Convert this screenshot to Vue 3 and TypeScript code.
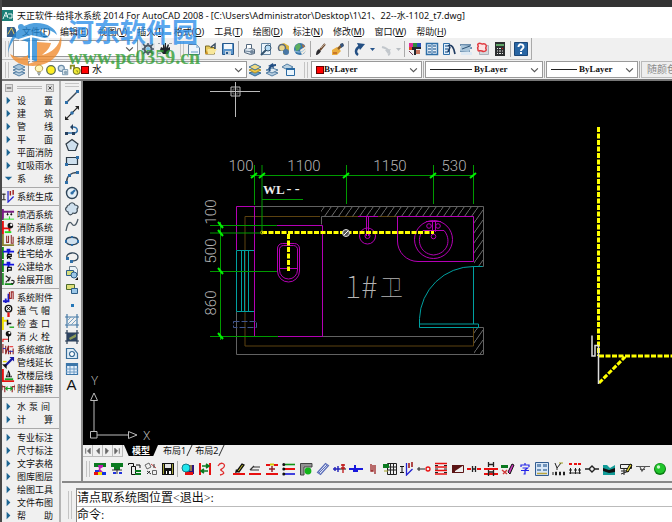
<script setup lang="ts">
import { h, ref } from 'vue'

type Shape = { d: string; fill: string; stroke: string; w: number }
const f = (fill: string, d: string): Shape => ({ d, fill, stroke: 'none', w: 0 })
const s = (stroke: string, d: string, w = 1, fill = 'none'): Shape => ({ d, fill, stroke, w })
const ring = (x: number, y: number, r: number) => `M${x - r} ${y}a${r} ${r} 0 1 0 ${2 * r} 0a${r} ${r} 0 1 0 ${-2 * r} 0z`

const navy = '#25405f'
const blue = '#2f6fa8'
const pale = '#cfe0ee'
const red = '#e81010'
const green = '#0a7a20'

const icons: Record<string, Shape[]> = {
  gear: [f('#dfe3e8', 'M0 1h14v12H0z'), s('#4a5866', ring(7, 7, 3.5), 2), s('#4a5866', 'M7 1v2M7 11v2M1 7h2M11 7h2M2 2l3 3M12 2L9 5M2 12l3-3M12 12L9 9', 1.5), f('#7dc1e8', ring(7, 7, 2))],
  hand: [f('#20242a', 'M3 5l2 1V2h1v4l1-5h1v5l2-4 1 1-1 3 2-1v3l-2 4H5L2 8z'), f('#9aa2aa', 'M0 1h2v1H0zM11 1h3v1h-3zM0 11h3v1H0z')],
  fresh: [s('#5d7e9e', 'M1.5 2.5h8l3 3v7h-11z', 1, '#eef5fb'), f('#a9c8e2', 'M9 2v4h4zM4 9h7v2H4z')],
  open: [s('#7a6a28', 'M1.5 12V4h4l1 1.5h4V12z', 1, '#e7c95c'), f('#f8e79a', 'M4 7h9l-3 5H1z'), s('#3a4d60', 'M7 5l4-3v5', 1.5), f('#d09422', 'M1 12l2-4 1 4z')],
  save: [s('#27598c', 'M1.5 1.5h11v11h-11z', 1, '#5c96cc'), f('#f2f7fb', 'M3 2h8v5H3z'), f('#c4d2de', 'M4 9h6v4H4z'), f('#27598c', 'M5 10h2v2H5z')],
  plot: [s('#53677c', 'M2.5 7.5l3-2 7 2v4l-4 1-6-2z', 1, '#dbe5ee'), s('#53677c', 'M4.5 6V2.5h5V6', 1, '#fff'), s('#71869b', 'M3 9l8 1', 1), f('#71869b', ring(10, 10, 2))],
  preview: [s('#6686a2', 'M2.5 1.5h9v11h-9z', 1, '#eaf4fc'), s('#34536e', ring(9, 6, 3), 1, '#b4daf4'), s('#34536e', 'M7 8l-5 5', 2)],
  publish: [f('#d9b33c', 'M3 3l5-2 5 3v5l-4 4-6-3z'), s('#58677c', ring(6, 6, 3.5), 1.5, '#e9d58c'), f('#4977a5', ring(10, 10, 3)), f('#e9f0f5', 'M3 9h4v3H3z')],
  globe: [f('#3976aa', ring(7, 7, 6)), f('#5dad5e', 'M2 4l4-3 2 3-2 4-3 1z'), f('#f1ece1', 'M7 8l6-4v5l-4 4z'), f('#b86f3a', 'M9 2l3 2-2 2z'), s('#a9cde5', 'M2 9c4 2 8 1 10-2')],
  brush: [f('#2b2b30', 'M2 13c0-3 1-5 3-6l2 2c-1 2-3 4-5 4z'), s('#6d4b30', 'M6 8l5-6', 2), s('#b7a08b', 'M7 6l4-4')],
  match: [f('#e9ad3f', 'M1 8l5-3 4 4-4 4H1z'), s('#8b5c24', 'M7 7l5-5', 2.5), f('#34547e', 'M9 2l3-1 1 3-3 2z'), f('#c97628', 'M2 10h4v2H2z')],
  undo: [s('#234f83', 'M6 13C3 11 3 6 9 4', 2.5), f('#234f83', 'M5 1l8 1-5 6z')],
  redo: [s('#c2c7cc', 'M10 13c3-1 2-6-6-8', 2), f('#c2c7cc', 'M13 7l-3 5-3-4z')],
  more: [f('#27558b', 'M5 6h5L7.5 9z')],
  moreOff: [f('#b8bdc2', 'M5 6h5L7.5 9z')],
  props: [f('#e02c9c', 'M1 1h4v4H1z'), f('#2c8e3c', 'M5 1h4v4H5z'), f('#2951b8', 'M9 1h4v4H9z'), f('#e14d24', 'M1 5h4v3H1z'), f('#23272d', 'M4 5h9v2H8v6H6V8H4z'), f('#c5735d', 'M8 8h4v4H8z'), s('#733c58', 'M1 9l4 4')],
  center: [s(blue, 'M1.5 1.5h11v11h-11z', 1.5, '#e9f1f8'), s('#4d7ba7', 'M3 4h3M3 7h3M3 10h3M8 4h3M8 7h3M8 10h3', 1.5), s(blue, 'M7 2v10')],
  palette: [s(blue, 'M1.5 1.5h11v11h-11z', 1, '#dfeefb'), f('#5486b2', 'M3 3h3v3H3zM7 3h4v1H7zM3 8h3v3H3zM7 8h4v1H7z')],
  tools: [s(blue, 'M1.5 1.5h6v11h-6z', 1, '#dfeefb'), s('#4d7ba7', 'M3 4h3M3 7h3M3 10h3', 1.5), s('#203c62', 'M6 4c4-2 6 2 7 8M8 5l-2 5', 1.7)],
  sheet: [f('#6d8fae', 'M1 2h11v2H1zM3 5h10v2H3zM1 8h10v2H1z'), f('#a9c5da', 'M2 3l10 1-2 6-9-1z'), f('#dde9f3', 'M2 10h11v3H2z'), s('#2c5275', 'M3 7l8-3')],
  markup: [s('#aab1ba', 'M3.5 3.5h9v9h-9z', 1, '#d5d9dd'), s('#e1393f', 'M2 2c2-2 3 0 4 0s3-1 4 1-1 2 0 4-2 3-4 2-4 1-4-1-1-2 0-3-1-2 0-3z', 1.5, '#fbe4e4')],
  calc: [f('#2c2e30', 'M2 0h10v14H2z'), f('#5ea366', 'M3 2h8v2H3z'), s('#e5e5e5', 'M4 6.5h6M4 9h6M4 11.5h6', 1), s('#2c2e30', 'M5.5 5v8M8.5 5v8'), f(red, 'M9 6h1v1H9z')],
  help: [s('#1b4677', 'M.5.5h13v13H.5z', 1, '#2865a3'), s('#fff', 'M4.5 5c0-4 5-3 5 0 0 2-2.5 1.5-2.5 4', 2), f('#fff', 'M6 10h2v2H6z')],
  layers: [s('#547fa4', 'M1 10l6-2 6 2-6 3z', 1, '#b5cde0'), s('#547fa4', 'M1 7l6-2 6 2-6 3z', 1, '#d0dfe9'), s('#547fa4', 'M1 4l6-3 6 3-6 3z', 1, '#a5c3da')],
  layerCur: [s('#376b98', 'M1 10l6-2 6 2-6 3z', 1, '#69a0c5'), s('#b08f29', 'M1 7l6-2 6 2-6 3z', 1, '#f0c946'), s('#376b98', 'M1 4l6-3 6 3-6 3z', 1, '#edda83')],
  layerPrev: [s('#547fa4', 'M1 10l6-2 6 2-6 3z', 1, '#b5cde0'), s('#547fa4', 'M1 7l6-2 6 2-6 3z', 1, '#dce7ef'), s('#234f83', 'M5 8c-2-3 1-6 6-6', 2), f('#234f83', 'M3 3l5-3 1 5z')],
  layerState: [s('#547fa4', 'M0 4l5-3 6 3-5 3z', 1, '#bad1e1'), s('#2a6aa3', 'M4.5 5.5h8v7h-8z', 1, '#e9f4fc'), f('#2a6aa3', 'M4 5h9v2H4z')],
  bulb: [s('#a68e3a', 'M5 9C0 5 4 1 7 1s7 4 2 8z', 1, '#fff6b8'), f('#566', 'M5 10h4v1H5zM6 12h2v1H6z')],
  sun: [s('#5c6f51', ring(7, 7, 5), 1.5, '#ffee22')],
  freeze: [s('#6c8da8', ring(5, 5, 3.5), 1.5, '#d3e1ea'), s('#6c8da8', 'M6.5 6.5h6v6h-6z', 1, '#e4edf3'), f('#8da7b8', ring(10, 10, 2))],
  lock: [s('#8a8c22', 'M2 6V2h4v4', 2), s('#6f7426', ring(9, 8, 4), 1.2, '#f2ec35'), s('#8a8c22', 'M8 8h2v2')],
  line: [s('#3e4955', 'M2 12L12 2', 1.5), f(blue, 'M0 11h3v3H0zM11 0h3v3h-3z')],
  xline: [s('#222', 'M0 14L14 0', 1.2), f('#222', 'M0 10l4 4H0zM10 0h4v4z'), f(blue, ring(7, 7, 1.8))],
  pline: [s(blue, 'M1 11h8c5 0 4-6-1-6', 1.5), f(navy, 'M0 10h3v3H0zM7 10h3v3H7zM8 2v6L5 5z')],
  polygon: [s('#2f3b46', 'M7 1.5l6 4.5-2.5 6.5h-7L1 6z', 1.2, pale)],
  rect: [s('#2f3b46', 'M1.5 3.5h11v7h-11z', 1.2, pale), f(blue, 'M0 9h3v3H0zM11 2h3v3h-3z')],
  arc: [s('#3e4955', 'M1.5 12.5c0-6 4-10 11-10', 1.5), f(blue, 'M0 11h3v3H0zM11 1h3v3h-3zM3 4h3v3H3z')],
  circle: [s('#2f4559', ring(7, 7, 5.5), 1.4, '#e4eff7'), s(blue, 'M7 7l3-3', 2), f(blue, ring(7, 7, 1.6))],
  cloud: [s('#3a4752', 'M4 3c1-3 5-3 6 0 3 0 4 2 2 4 1 3-1 5-4 4-2 3-5 2-5-1-3-1-3-4-1-5 0-1 1-2 2-2z', 1.2, pale)],
  spline: [s('#4c5a66', 'M1 13C3 2 6 4 7 6s4 3 6-5', 1.3)],
  ellipse: [s('#2f4559', 'M1 7c0-5 12-5 12 0s-12 5-12 0z', 1.3, pale), f(blue, 'M0 6h2v3H0zM12 6h2v3h-2zM6 2h2v2H6zM6 10h2v2H6z')],
  earc: [s('#2f4559', 'M2 8c-2-6 11-7 11-1 0 3-3 4-6 4', 1.3), f(blue, 'M1 7h3v3H1zM5 10h3v3H5z')],
  insert: [s('#6a7d8d', 'M4.5.5h6l2 3v6h-8z', 1, '#eaf2f8'), s('#2c5d87', 'M1.5 4.5h7v5h-7z', 1, '#d6dd7c'), s('#2c5d87', ring(9, 9, 3), 1, '#9cc7e7'), f('#111', 'M13 11v3h-3z')],
  block: [s('#4d6b2d', 'M1.5 2.5h8v5h-8z', 1, '#dedf79'), s('#2c5d87', 'M6.5 6.5h6v5h-6z', 1, '#9cc7e7')],
  point: [f('#2577b8', 'M6 6h3v3H6z')],
  hatch: [s('#4478a5', 'M2 0v14M12 0v14M0 3h14M0 11h14', 1.2), s('#79a1c1', 'M2 7l4-4M2 11l8-8M6 11l6-6M10 11l2-2')],
  gradient: [s('#253951', 'M2 0v14M12 0v14M0 3h14M0 11h14', 1.2), f('#2c4260', 'M2 3h10v8H2z'), f('#8b9a58', 'M4 8l7-4v3l-6 3z')],
  region: [s('#396d98', 'M1.5 12.5V2.5h7l4 5v5z', 1.2, '#deebf5'), s('#396d98', ring(7, 8, 2.5), 1.2, '#fff')],
  table: [s('#3c76a9', 'M1.5 1.5h11v11h-11z', 1.2, '#e4effa'), f('#3c76a9', 'M1 1h12v3H1z'), s('#6e9cc5', 'M1 7h12M1 10h12M5 4v8M9 4v8')],
  // sidebar
  sysgen: [s('#111', 'M0 4.5h4M0 10.5h4M2 4v6'), s('#2222d0', 'M6.5 1v12l6-6', 1.3), s('#a02020', 'M9 6V1M12 5V0', 1.6)],
  spray: [s('#7b1c86', 'M1 1v12M1 4h12', 2), s('#111', 'M6 5v3M10 5v3M5 7h2M9 7h2'), s('#24e024', 'M1 12h12M8 9v3')],
  fire: [s(red, 'M1 0v14M1 8h7v4', 2), s('#24e024', 'M3 12h7', 2), f('#111', ring(9, 5, 3)), f('#fff', ring(10, 4, 1.3))],
  drain: [s('#8b8232', 'M1 0v12h12', 2), s('#8f3030', 'M5 2v7h2V2M10 1v9h2V3', 1.2)],
  house: [s('#118c18', 'M1 0v13', 2), s('#1414e0', 'M1 5h12M7 2v6M5 3h4', 2), s('#111', 'M6 13V8h4v2H6l4 3', 1.3)],
  publicw: [s('#118c18', 'M1 0v13', 2), s('#1414e0', 'M1 5h12M7 2v6M5 3h4', 2), s('#111', 'M6 13V8h4v3H6', 1.3)],
  unfold: [s('#118c18', 'M1 0v13M3 12h9', 1.7), s('#222', 'M4 3l4 3-4 4M9 4l-2 5M10 8c5-1 3 5 0 3', 1.2)],
  sysatt: [s('#1818cc', 'M1 11h7M4 8v5M7 11V3', 2), s('#9c2424', 'M8 1v7h2V1h2v8', 1.2)],
  vent: [s('#111', ring(7, 5, 3.5), 1.5, '#eee'), s('#111', 'M5 3l4 4M9 3L5 7'), s(red, 'M7 9v5', 2.5)],
  check: [s('#f0e000', 'M1 0v14M1 4h5', 2), s('#111', 'M6 3v6M6 7h4', 1.6), s('#1fa71f', 'M8 11h5', 1.5)],
  hydrant: [s(red, 'M1 13v-3h6', 1.2), s('#111', 'M7 13V6'), f('#111', ring(7, 4, 3)), f('#fff', ring(8, 3, 1.2))],
  scale: [s('#8f2020', 'M1 1v10M4 3v9l3-9v9M9 8v4M12 6v6', 1.2), s('#2424b8', 'M1 6h3M7 9h5'), s(red, 'M8 4h4')],
  extend: [s('#1a1aa5', 'M3 11l8-8', 2.5), f('#1a1aa5', 'M8 1h5v5z'), f('#111', 'M0 9h5v5z'), s('#ddd400', 'M1 6h4', 1.5)],
  floor: [s(red, 'M1 0v13h12', 2), f('#111', 'M7 1l4 8H4z'), f('#fff', 'M6 4h1v4H6zM9 4h1v4H9z'), s('#19a522', 'M3 11h9', 2)],
  flip: [s('#9a3030', 'M0 5h3v6M0 3v6M14 5h-3v6M14 3v6', 1.3), s('#18a026', 'M4 7h6M6 5L4 7l2 2M9 5l2 2-2 2', 1.3)],
  // bottom bar
  rainbow: [f(green, 'M1 1h12v4H1z'), f('#c01bb4', 'M5 3h5v2L7 7l3 3H4l2-3z'), f('#2233dd', 'M2 8h4v2H2z'), f(red, 'M1 10h4v3H1z'), f('#f1de00', 'M5 10h4v3H5z'), f('#1330e0', 'M9 10h4v3H9z')],
  tree: [f(green, 'M1 1h12v4H1zM4 5h6v3H4z'), s('#333', 'M2 8h10M7 7v5'), f('#2233dd', 'M3 10h3v2H3zM9 10h3v2H9z')],
  copyprop: [s('#111', 'M1.5 3V1.5h5V5M4.5 4.5h4v8h-4z', 1, '#eee'), s('#111', 'M9 3h4v3'), f(green, 'M8 8h6v2H8zM8 11h6v2H8z')],
  swap: [s('#666', 'M1 3l4-2 2 4-4 2zM8.5 8.5h4v4h-4z'), s('#c44', 'M7 2l5 4', 1), s('#333', 'M3 9l4 3M3 12l3-3M10 2v4')],
  disk: [f('#111', 'M1 1h12v12H1z'), f('#a1a13a', 'M2 2h1v10H2zM11 2h1v10h-1z'), f('#e4e4e4', 'M4 2h6v4H4z'), f('#fff', 'M5 9h5v3H5z'), f('#111', 'M6 9h2v3H6z')],
  lens: [f('#2c157d', 'M5 3h8v9H5z'), f(red, 'M4 10h8v3H4z'), s('#157d8c', ring(5, 6, 4), 1, '#20e6ed'), s('#f3da24', 'M10 3v6')],
  trim: [s(red, 'M2 1v12M12 1v12', 2), s(green, 'M4 4h6M8 2l3 2-3 2M10 9H4M6 7L3 9l3 2', 1.6)],
  curve: [s('#e02e2e', 'M3 4c3-5 8-2 6 1S4 7 7 9s2 3-2 4', 1.3)],
  pencil: [s(red, 'M1 12h12', 2), s('#111', 'M5 9l5-7 2 1-5 7z', 1.3, '#d4d02b'), f('#111', 'M3 11l1-4 3 3z')],
  under: [s(red, 'M1 12h12', 2), s('#333', 'M5 5h7M2 8h9M6 4l-4 4', 1.2)],
  join: [s(red, 'M1 3h4M9 3h4M1 12h12', 2), s('#d5c900', 'M5 2.5h4', 2), s('#8d1b22', 'M7 4v6M4 7h6', 1.4)],
  list: [s(red, 'M3 7h10', 2), s('#129417', 'M3 2.5h10', 1.6), s('#1616da', 'M3 12h10', 1.6), f('#111', ring(1.8, 2.5, 1.5)), f('#111', ring(1.8, 7, 1.5)), f('#111', ring(1.8, 12, 1.5))],
  corner: [s('#444', 'M1.5 13V1.5H13V5H5v8z', 1, '#939393'), f('#12b51a', ring(9, 9, 3.4))],
  pipe: [s('#5a6cb8', 'M1.5 10.5l8-9 3 2-8 9z', 1.2, '#e5eaf7'), s('#5a6cb8', 'M3 11l8-8')],
  valve: [s('#2222b8', 'M0 7h7M2 5v4M5 4v6', 1.4), s('#111', 'M7 7h6'), s('#be1414', 'M10 2v9M8 3h4M8 6h4', 1.3)],
  tap: [s('#1818dc', 'M0 7h14M6 3v6M4 9h5', 2)],
  riser: [s('#922', 'M5 2v7h2V3M9 3v9', 1.3)],
  grid: [s('#222', 'M4.5 1.5h9v11h-9zM4 5h9M4 8h9M7.5 2v11M10.5 2v11'), f(green, 'M0 2h6v4H0z'), s('#a3a323', 'M1 9h4')],
  link: [s('#222', 'M0 7h8M2 5v4'), s(red, ring(11, 7, 2), 1.3)],
  bars: [s(red, 'M1 1.5h12M1 5h12M1 8.5h12M1 12h12', 1.5), s('#222', 'M1 3.500h3M10 3.500h3M1 7h3M10 7h3M1 10.500h3M10 10.500h3', 1)],
  wedge: [s('#5b1515', 'M1.5 3.5h11v7h-11z', 1, '#eee'), f('#5b1515', 'M1 3h12L4 9v2H1z')],
  hdash: [s(red, 'M0 7h4M10 7h4', 1.8), s('#222', 'M5.5 4v6M8.5 4v6M5 7h4', 1.3)],
  stack: [s(red, 'M0 7h14M0 12h14', 2), s('#222', 'M4.5 0v5M9.5 0v5M4 2.5h5M4.5 8v6M9.5 8v6M4 10h6', 1.3)],
  erase: [f(green, 'M0 3h7v3H0z'), s('#111', 'M7 10l4-8 2 1-4 9z', 1, '#cd36bb'), s('#d03838', 'M1 8l5 4M2 12l4-4', 1.4)],
  zi: [s('#2424e8', 'M7 1v2M3 5V3h8v2M4.500 6h5L7 8v4H5.500M3 8.500h8', 1.2)],
  window: [s('#335d91', 'M.5.5h13v13H.5z', 1, '#d7e6f7'), f('#6f93bb', 'M2 2h4v3H2zM8 2h4v3H8zM2 7h4v2H2zM8 7h4v2H8z'), s('#bba63d', 'M2 11.5h10', 1.5)],
  level: [s('#222', 'M3 1l2 5 4-5M5 6v2M1 10v3M4.5 10v3h-1v-3zM8.5 10v3h-1v-3zM12.5 10v3h-1v-3z'), s('#a3a323', 'M7 1h4')],
  sprink: [s('#222', 'M1 11h12M2.5 6v6M7.5 6v6M11.5 6v6M1 8h3M6 8h3M10 8h3'), f(red, 'M1 1h3v2H1zM6 1h3v2H6zM10 1h3v2h-3z')],
  node: [s('#222', 'M0 7h4M10 7h4M7 4l3 3-3 3-3-3z', 1.4)],
  terrain: [f('#129c98', 'M1 3h4l3 3 5-3v10H1z'), f('#111', 'M1 6l6 2 6-2v4l-6 1-6-2z')],
  edit: [s('#222', 'M1.5 2.5h11v4h-11zM2 9h8M5 6v7M2 12l8-3'), s('#111', 'M7 9l4-7 2 1-4 7z', 1, '#ded52f')],
  flag: [s('#555', 'M0 4.5h14M4 7.5h5M4 5l2 4 3-4', 1.2)],
  ball: [f('#0a7c12', ring(7, 7, 6)), f('#20c52b', ring(7, 6.5, 5)), f('#c9f6c9', ring(5.5, 5, 1.7))]
}

const Icon = (props: { name: string }) =>
  h('svg', { class: 'ico', viewBox: '0 0 14 14', 'aria-hidden': 'true' },
    (icons[props.name] ?? []).map(p => h('path', { d: p.d, fill: p.fill, stroke: p.stroke, 'stroke-width': p.w })))
Icon.props = ['name']

const menus = [['文件', 'F'], ['编辑', 'E'], ['视图', 'V'], ['插入', 'I'], ['格式', 'O'], ['工具', 'T'], ['绘图', 'D'], ['标注', 'N'], ['修改', 'M'], ['窗口', 'W'], ['帮助', 'H']]

const standard = [['fresh', 'open', 'save'], ['plot', 'preview', 'publish', 'globe'], ['brush', 'match'], ['undo', 'more', 'redo', 'moreOff'], ['props', 'center', 'tools', 'sheet', 'markup', 'calc'], ['help']]

const drawTools = ['line', 'xline', 'pline', 'polygon', 'rect', 'arc', 'circle', 'cloud', 'spline', 'ellipse', 'earc', 'insert', 'block', 'point', 'hatch', 'gradient', 'region', 'table']

type Row = { t: string; i?: string }
const palette: Row[][] = [
  [{ t: '设 置' }, { t: '建 筑' }, { t: '管 线' }, { t: '平 面' }, { t: '平面消防' }, { t: '虹吸雨水' }, { t: '系 统', i: 'open' }],
  [{ t: '系统生成', i: 'sysgen' }],
  [{ t: '喷洒系统', i: 'spray' }, { t: '消防系统', i: 'fire' }, { t: '排水原理', i: 'drain' }, { t: '住宅给水', i: 'house' }, { t: '公建给水', i: 'publicw' }, { t: '绘展开图', i: 'unfold' }],
  [{ t: '系统附件', i: 'sysatt' }, { t: '通 气 帽', i: 'vent' }, { t: '检 查 口', i: 'check' }, { t: '消 火 栓', i: 'hydrant' }, { t: '系统缩放', i: 'scale' }, { t: '管线延长', i: 'extend' }, { t: '改楼层线', i: 'floor' }, { t: '附件翻转', i: 'flip' }],
  [{ t: '水 泵 间' }, { t: '计 算' }],
  [{ t: '专业标注' }, { t: '尺寸标注' }, { t: '文字表格' }, { t: '图库图层' }, { t: '绘图工具' }, { t: '文件布图' }, { t: '帮 助' }]
]

const quickA = ['rainbow', 'tree', 'copyprop', 'swap', 'disk']
const quickB = ['lens', 'trim', 'curve', 'pencil', 'under', 'join', 'list', 'corner', 'pipe', 'valve', 'tap', 'riser', 'grid', 'sysgen', 'link', 'bars', 'wedge', 'hdash', 'stack', 'erase', 'zi', 'window', 'level', 'sprink', 'node', 'terrain', 'edit', 'flag', 'ball']

const xTicks = [254, 262, 346, 433, 473]
const yTicks = [225, 233, 271, 336]
const sheets = ['模型', '布局1', '布局2']
const sheet = ref('模型')
const command = ref('')
const navs = ['M3 2v6M8 2L5 5l3 3z', 'M7 2L4 5l3 3z', 'M3 2l3 3-3 3z', 'M7 2v6M2 2l3 3-3 3z']
</script>

<template>
  <div class="app">
    <div class="strip"></div>
    <header class="title">
      <svg class="logo" viewBox="0 0 11 11" aria-hidden="true"><path d="M0 0h11v11H0z" fill="#1b7f78" /><path d="M1 9l3-7 2 6M3 6h3M6 4h4v4H7" stroke="#e8f5f2" fill="none" /></svg>
      <h1>天正软件-给排水系统 2014 For AutoCAD 2008 - [C:\Users\Administrator\Desktop\1\21、22--水-1102_t7.dwg]</h1>
    </header>
    <nav class="menu">
      <svg class="doc" viewBox="0 0 12 12" aria-hidden="true"><path d="M1 1h8l2 3v8H1z" fill="#35618d" /><path d="M2 9l4-7 3 7" stroke="#f0d050" fill="none" /></svg>
      <button v-for="m in menus" :key="m[1]" type="button">{{ m[0] }}(<u>{{ m[1] }}</u>)</button>
    </nav>

    <div class="bar bar1">
      <i class="grip"></i>
      <div class="combo workspace">
        <select aria-label="工作空间"><option></option></select>
        <svg class="chev" viewBox="0 0 8 8" aria-hidden="true"><path d="M1 3l3 3 3-3" /></svg>
      </div>
      <button class="tool" type="button" aria-label="工作空间设置"><Icon name="gear" /></button>
      <button class="tool" type="button" aria-label="我的工作空间"><Icon name="hand" /></button>
      <i class="grip wide"></i>
      <div v-for="(g, n) in standard" :key="n" class="group">
        <button v-for="i in g" :key="i" class="tool" :class="{ slim: i.startsWith('more') }" type="button" :aria-label="i"><Icon :name="i" /></button>
      </div>
    </div>

    <div class="bar bar2">
      <i class="grip"></i>
      <button class="tool" type="button" aria-label="图层特性"><Icon name="layers" /></button>
      <div class="combo layer">
        <Icon v-for="i in ['bulb', 'sun', 'freeze', 'lock']" :key="i" :name="i" />
        <i class="swatch"></i>
        <select aria-label="图层"><option>水</option></select>
        <svg class="chev" viewBox="0 0 8 8" aria-hidden="true"><path d="M1 3l3 3 3-3" /></svg>
      </div>
      <button v-for="i in ['layerCur', 'layerPrev', 'layerState']" :key="i" class="tool" type="button" :aria-label="i"><Icon :name="i" /></button>
      <i class="grip wide"></i>
      <div class="combo color">
        <i class="swatch"></i>
        <select class="serif" aria-label="颜色"><option>ByLayer</option></select>
        <svg class="chev" viewBox="0 0 8 8" aria-hidden="true"><path d="M1 3l3 3 3-3" /></svg>
      </div>
      <i class="rule"></i>
      <div class="combo linetype">
        <i class="dash"></i>
        <select class="serif" aria-label="线型"><option>ByLayer</option></select>
        <svg class="chev" viewBox="0 0 8 8" aria-hidden="true"><path d="M1 3l3 3 3-3" /></svg>
      </div>
      <i class="rule"></i>
      <div class="combo weight">
        <i class="dash short"></i>
        <select class="serif" aria-label="线宽"><option>ByLayer</option></select>
        <svg class="chev" viewBox="0 0 8 8" aria-hidden="true"><path d="M1 3l3 3 3-3" /></svg>
      </div>
      <i class="rule"></i>
      <button class="plotstyle" type="button" disabled>随颜色</button>
    </div>

    <div class="main">
      <aside class="palette">
        <div class="phead">
          <button type="button" aria-label="最小化"><svg viewBox="0 0 8 8"><path d="M1 4h6" /></svg></button>
          <i class="pgrip"></i>
          <button type="button" aria-label="关闭"><svg viewBox="0 0 8 8"><path d="M2 2l4 4M6 2L2 6" /></svg></button>
        </div>
        <ul v-for="(g, n) in palette" :key="n">
          <li v-for="r in g" :key="r.t">
            <button type="button">
              <svg v-if="!r.i || r.i === 'open'" class="ico" viewBox="0 0 14 14" aria-hidden="true"><path :d="r.i ? 'M3 5h8l-4 4z' : 'M5 3l4 4-4 4z'" fill="#1d6694" /></svg>
              <Icon v-else :name="r.i" />
              <span :class="{ three: r.t.length === 5 }">{{ r.t }}</span>
            </button>
          </li>
        </ul>
      </aside>

      <div class="right">
        <div class="work">
          <div class="draw">
            <i class="vgrip"></i>
            <button v-for="i in drawTools" :key="i" class="tool" type="button" :aria-label="i"><Icon :name="i" /></button>
            <button class="tool mtext" type="button">A</button>
          </div>
          <div class="view">
            <svg class="canvas" role="img" aria-label="1#卫 平面图">
              <defs>
                <pattern id="hatch" width="7" height="10" patternUnits="userSpaceOnUse"><path d="M0 10L7 0" stroke="#6c6c6c" stroke-width="1" /></pattern>
              </defs>
              <g class="dwg" transform="translate(-83 -81)">
                <path class="cur" d="M210 91.500h50M235.500 82v35M231 87h9v9h-9z" />
                <path class="cur" d="M233 89h5v5h-5z" opacity=".5" />

                <path class="grey" d="M254 206.500h229.500v60h-10M483.500 327.500v27h-247v-43M321.500 216.500v8M322 336.500h151.500M473.500 327.500h10M321.500 216.500h152" />
                <path class="olive" d="M320 216.500h-75v129.500h228.500v-18M340 216.500h57" />
                <path fill="url(#hatch)" d="M321 207h162v59h-9v-49.500H321zM474 328h9v26h-9z" />
                <path class="mag" d="M236.500 250v-43.500h18v130M277 225.500h45.500v111H278" />
                <path class="mag" d="M277.500 249a5 5 0 0 1 5-5.500h12a5 5 0 0 1 5 5.500v22a11 11 0 0 1-22 0zM279.500 250a4 4 0 0 1 4-4.500h10a4 4 0 0 1 4 4.500v20a9 9 0 0 1-18 0zM279 268.500h19" />
                <path class="mag" d="M358 216.500h20M366.500 217v19M368.500 217v19" />
                <circle class="mag" cx="367.500" cy="236" r="8" /><circle class="mag" cx="367.500" cy="236" r="2.500" />
                <path class="mag" d="M397.500 216.500h76v45H418a20.500 20.500 0 0 1-20.500-20.500zM423 230.500c-7 8-4 23 10.500 24.500 15-1.500 18-16 10.500-24.500zM432.500 222v10M435.500 222v10M426 221.500h15" />
                <circle class="mag" cx="433.500" cy="239.500" r="19" /><circle class="mag" cx="429" cy="226" r="2.300" /><circle class="mag" cx="438" cy="226" r="2.300" /><circle class="mag" cx="433.500" cy="236.500" r="2.300" />
                <path class="cyan" d="M254 250.500h-17.500v61H254M241.500 251v60M244.500 251v60M248.500 251v60M473.500 324v-57.500a54 54 0 0 0-54 52v9h59v-3.500h-59M473.500 266.500h9" />
                <path class="slate" d="M233.500 321.500h23v6h-23z" />

                <path class="grn" d="M250 175.500h224M254.500 165v40M262 165v67M346.500 165v39M433.500 165v39M473.500 165v39M262 199.500h41M220.500 222v118M210 225.500h67M210 233h52M210 271.500h67M210 336.500h68" />
                <path class="tick" :d="xTicks.map(x => `M${x - 3} 178l6-5`).join('')" />
                <path class="tick" :d="yTicks.map(y => `M218 ${y - 3}l5 6`).join('')" />

                <path class="pipe" d="M262 232.500h172M288.500 234v37M598.500 127v229M599 356h73M599 383l26-26" />
                <circle cx="262" cy="232.500" r="1.500" fill="none" stroke="#bbb000" />
                <circle cx="346" cy="233" r="3.500" fill="#555" stroke="#ddd" /><path d="M344 235l4-4" stroke="#fff" />
                <path d="M592 335.500v20.500h3v-10.500h3.500v38.500" fill="none" stroke="#ddd" stroke-width="1.500" />

                <g class="dims">
                  <text x="241" y="171">100</text><text x="304" y="171">1100</text><text x="390" y="171">1150</text><text x="454" y="171">530</text>
                  <text transform="translate(216 212) rotate(-90)">100</text>
                  <text transform="translate(216 251) rotate(-90)">500</text>
                  <text transform="translate(216 303) rotate(-90)">860</text>
                </g>
                <text x="263" y="194" class="wl">WL<tspan class="thin">--</tspan></text>
                <text x="345" y="298" class="room">1#</text>
                <text x="380" y="296" class="room wei">卫</text>

                <path class="cur" d="M94 393l-3.500 7.500h7zM94 401v30M90.500 431.500h6.500v6.500h-6.500zM97 435h31M128.500 431.500v7L137 435z" />
                <text x="91" y="385" class="axis">Y</text><text x="143" y="440" class="axis">X</text>
              </g>
            </svg>
            <div class="tabs">
              <button v-for="(d, n) in navs" :key="n" class="nav" type="button" :aria-label="'布局导航 ' + (n + 1)"><svg viewBox="0 0 10 10"><path :d="d" /></svg></button>
              <button v-for="t in sheets" :key="t" class="tab" :class="{ on: t === sheet }" type="button" @click="sheet = t"><span>{{ t }}</span></button>
            </div>
            <div class="quick">
              <i class="grip"></i>
              <div class="qa"><button v-for="i in quickA" :key="i" class="tool" type="button" :aria-label="i"><Icon :name="i" /></button></div>
              <div class="qb"><button v-for="i in quickB" :key="i" class="tool" type="button" :aria-label="i"><Icon :name="i" /></button></div>
            </div>
          </div>
        </div>
        <div class="command">
          <i class="grip"></i>
          <div class="lines">
            <p>请点取系统图位置&lt;退出&gt;:</p>
            <div class="prompt"><label for="cmd">命令:</label><input id="cmd" v-model="command" type="text" autocomplete="off" /></div>
          </div>
        </div>
      </div>
    </div>

    <div class="mark">
      <svg viewBox="0 0 56 48" aria-hidden="true">
        <path d="M1 33C2 14 14 5 27 3c12-1 22 5 23 12-5-5-12-7-18-5l10 7-12 3v22l-9-4V22L8 18C4 23 2 28 1 33z" fill="#1f86d6" />
        <path d="M54 16c3 17-10 30-28 30C15 46 6 42 3 34c8 5 14 4 18 1v9l9-3V22l14 1c-1 5-5 9-9 12 10-2 17-9 19-19z" fill="#f08a2c" />
        <path d="M12 20l12-4 18 4M24 16v26" fill="none" stroke="#fff" stroke-width="2" />
        <circle cx="14" cy="7" r="3" fill="#1f86d6" />
      </svg>
      <div>
        <strong>河东软件园</strong>
        <span>www.pc0359.cn</span>
      </div>
    </div>
  </div>
</template>

<style>
html, body { margin: 0; background: #f0f0f0; }
</style>

<style scoped>
.app { position: relative; box-sizing: border-box; height: 100vh; display: flex; flex-direction: column; overflow: hidden; border-left: 2px solid #484848; background: #f0f0f0; color: #111; font: 9px/13px "Noto Sans", "Noto Sans CJK SC", sans-serif; }
button, select, input { font: inherit; color: inherit; margin: 0; padding: 0; border: 0; border-radius: 0; background: none; }
button { display: flex; align-items: center; white-space: nowrap; }
.ico { display: block; width: 14px; height: 14px; flex: none; }
.strip { flex: none; height: 7px; margin-left: -2px; background: #333; }
.title { flex: none; display: flex; align-items: center; height: 17px; background: #fff; gap: 4px; }
.title h1 { margin: 0; font-size: 9px; font-weight: 400; white-space: nowrap; }
.logo { width: 11px; height: 11px; }
.menu { flex: none; display: flex; align-items: center; height: 14px; gap: 10px; background: #fff; padding-left: 4px; }
.doc { width: 11px; height: 11px; margin-right: -5px; }
.menu u { text-underline-offset: 1px; }

.bar { flex: none; display: flex; align-items: center; box-sizing: border-box; }
.bar1 { height: 22px; gap: 2px; align-self: flex-start; padding-right: 3px; border-right: 1px solid #aaa; border-bottom: 1px solid #bbb; }
.bar2 { height: 21px; border-bottom: 2px solid #777; overflow: hidden; }
.grip { flex: none; width: 2px; height: 16px; margin: 0 2px 0 3px; border: 1px solid #c4c4c4; border-width: 0 1px; }
.bar1 .wide { margin: 0 0 0 6px; }
.bar2 .wide { margin: 0 3px 0 8px; }
.rule { flex: none; width: 1px; height: 17px; margin: 0 1px; background: #aaa; }
.tool { flex: none; justify-content: center; width: 15px; height: 16px; }
.tool.slim { width: 7px; }
.group { display: flex; gap: 2px; }
.group + .group { border-left: 1px solid #aaa; padding-left: 2px; margin-left: 1px; }
.combo { flex: none; display: flex; align-items: center; box-sizing: border-box; height: 17px; border: 1px solid #999; background: #fff; padding: 0 3px 0 4px; }
.combo select { flex: 1; min-width: 0; appearance: none; height: 15px; outline: none; }
.combo .ico { width: 12px; height: 12px; }
.chev { flex: none; width: 9px; height: 9px; fill: none; stroke: #555; pointer-events: none; }
.workspace { width: 125px; }
.layer { width: 219px; margin: 0 0 0 2px; }
.layer select { padding-left: 3px; font-size: 10px; }
.bar2 .tool + .tool { margin-left: 2px; }
.swatch { flex: none; width: 6px; height: 6px; border: 1px solid #600; background: #f00; }
.color { width: 111px; }
.linetype { width: 118px; }
.weight { width: 92px; }
.dash { flex: none; width: 42px; height: 1px; margin-right: 2px; background: #222; }
.dash.short { width: 26px; }
.serif { font-family: "Liberation Serif", serif; font-weight: 700; }
.plotstyle { flex: 1; height: 17px; padding-left: 5px; border: 1px solid #bbb; color: #888; background: #eee; font-size: 10px; }

.main { flex: 1; min-height: 0; display: flex; }
.palette { flex: none; width: 57px; overflow: hidden; border-right: 2px solid #b5b5b5; margin-right: 1px; }
.phead { display: flex; align-items: center; justify-content: space-between; height: 13px; padding: 0 5px 0 3px; }
.phead button { width: 8px; height: 8px; background: #ddd; border: 1px solid #aaa; box-sizing: border-box; }
.phead svg { width: 8px; height: 8px; stroke: #111; }
.pgrip { width: 25px; height: 1px; border: 1px solid #bbb; border-width: 1px 0; }
.palette ul { margin: 0; padding: 0; list-style: none; }
.palette ul + ul { border-top: 1px solid #aaa; margin-top: 2px; padding-top: 2px; }
.palette li button { width: 100%; height: 13px; gap: 2px; line-height: 13px; }
.palette .ico { width: 13px; height: 13px; }
.palette span { width: 36px; text-align: justify; text-align-last: justify; }
.palette span.three { width: 33px; }

.right { flex: 1; min-width: 0; display: flex; flex-direction: column; }
.work { flex: 1; min-height: 0; display: flex; }
.draw { flex: none; width: 19px; display: flex; flex-direction: column; align-items: center; border-right: 2px solid #8c8c8c; }
.vgrip { width: 14px; height: 2px; margin: 2px 0; border: 1px solid #c4c4c4; border-width: 1px 0; }
.mtext { font: 400 15px/16px "Liberation Sans", sans-serif; }
.view { flex: 1; min-width: 0; display: flex; flex-direction: column; }
.canvas { flex: 1; min-height: 0; width: 100%; display: block; background: #000; }

.cur { fill: none; stroke: #bbb; }
.grey { fill: none; stroke: #626262; }
.olive { fill: none; stroke: #5c4210; }
.mag { fill: none; stroke: #b400b4; }
.cyan { fill: none; stroke: #00a0a0; }
.slate { fill: none; stroke: #40558c; stroke-dasharray: 6 2; }
.grn { fill: none; stroke: #009a00; }
.tick { fill: none; stroke: #00f000; stroke-width: 2px; }
.pipe { fill: none; stroke: #ff0; stroke-width: 3px; stroke-dasharray: 5 1.5; }
.dwg text { fill: #b4b4b4; }
.dims text { font: 300 15px Roboto, sans-serif; text-anchor: middle; }
.dwg .wl { fill: #eee; font: 700 13px "Liberation Serif", serif; }
.dwg .thin { font: 14px "Liberation Mono", monospace; }
.dwg .room { font: 100 31px "Noto Sans CJK SC", sans-serif; }
.dwg .wei { font-size: 23px; }
.dwg .axis { font: 300 12px Roboto, sans-serif; }

.tabs { flex: none; display: flex; height: 12px; }
.nav { width: 10px; box-sizing: border-box; border: 1px solid #bbb; border-width: 0 1px 1px 0; }
.nav svg { width: 10px; height: 10px; fill: #666; stroke: #666; stroke-width: 1; }
.tab { position: relative; height: 11px; padding: 0 4px; margin-left: 1px; }
.tab::after { content: ""; position: absolute; right: 0; top: 0; width: 1px; height: 11px; background: #333; transform: skewX(-25deg); }
.tab.on { padding: 0 8px; background: #000; color: #fff; font-weight: 700; clip-path: polygon(0 0, 100% 0, 86% 100%, 14% 100%); }
.quick { flex: none; display: flex; align-items: center; height: 24px; padding-right: 5px; }
.qa, .qb { display: flex; justify-content: space-between; }
.qa { gap: 2px; padding-right: 2px; margin-right: 3px; border-right: 1px solid #aaa; }
.qb { flex: 1; min-width: 0; }
.qb .tool { width: 14px; }

.command { flex: none; display: flex; border-top: 2px solid #888; padding-top: 5px; }
.command .grip { height: 28px; margin: 3px 4px 0 6px; }
.lines { flex: 1; border: 1px solid #888; border-width: 2px 0 0 1px; background: #fff; font: 12px/16px "Liberation Serif", "Noto Sans CJK SC", serif; }
.lines p { margin: 0; height: 16px; border-bottom: 1px solid #bbb; }
.prompt { display: flex; height: 15px; }
.prompt input { flex: 1; outline: none; }

.mark { position: absolute; left: 5px; top: 17px; display: flex; align-items: flex-start; gap: 5px; opacity: 0.78; pointer-events: none; }
.mark svg { width: 56px; height: 48px; margin-top: 3px; }
.mark div { display: flex; flex-direction: column; }
.mark strong { font: 700 26px/28px "Noto Sans CJK SC", sans-serif; color: #2c8fea; }
.mark span { font: 700 20px/24px "Liberation Serif", serif; color: #2f9d33; }
</style>
